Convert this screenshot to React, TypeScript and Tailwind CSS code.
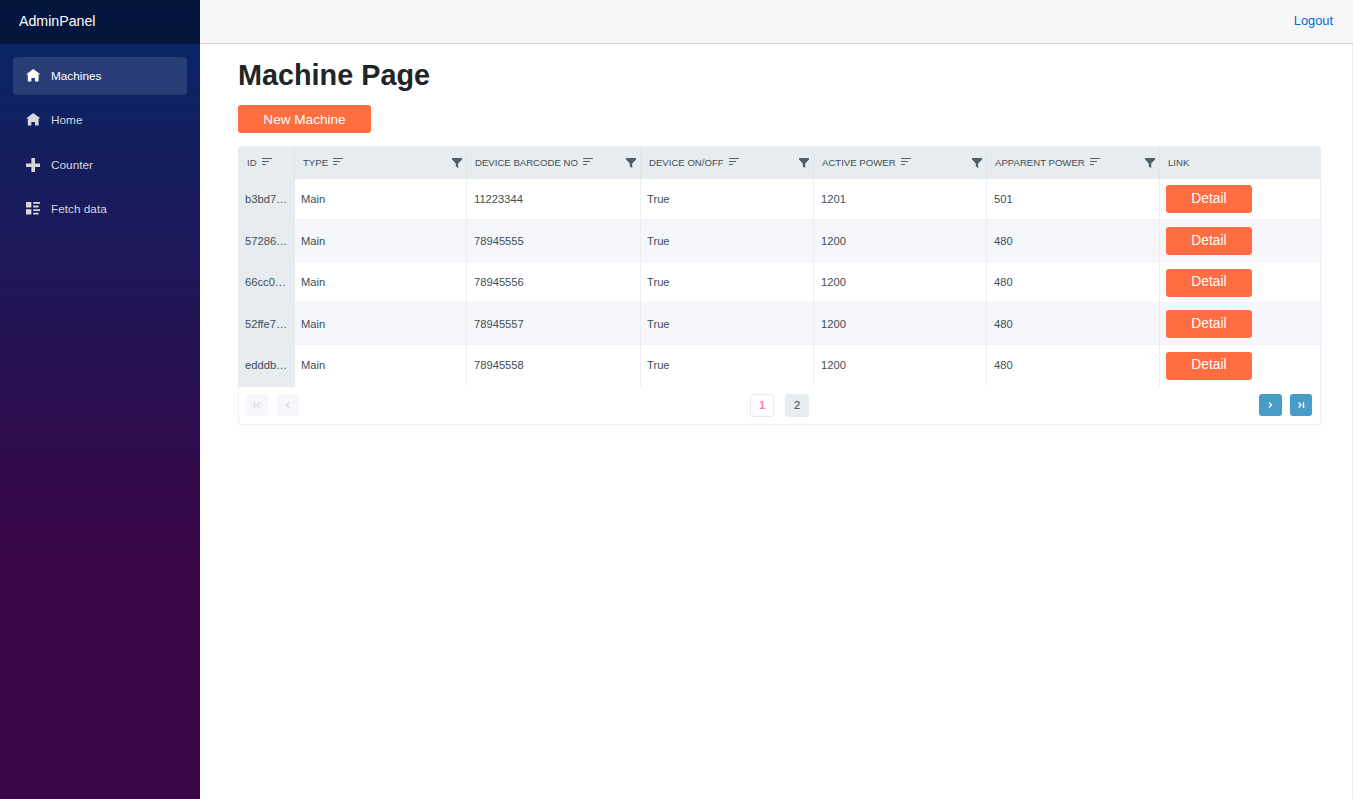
const machines = [
  { id: 'b3bd7…', barcode: '11223344', power: '1201', apparent: '501' },
  { id: '57286…', barcode: '78945555', power: '1200', apparent: '480' },
  { id: '66cc0…', barcode: '78945556', power: '1200', apparent: '480' },
  { id: '52ffe7…', barcode: '78945557', power: '1200', apparent: '480' },
  { id: 'edddb…', barcode: '78945558', power: '1200', apparent: '480' },
];

const columns = ['TYPE', 'DEVICE BARCODE NO', 'DEVICE ON/OFF', 'ACTIVE POWER', 'APPARENT POWER'];

const gridCols = 'grid grid-cols-[57px_172px_174px_173px_173px_173px_1fr]';

function NavIcon({ d }: { d: string }) {
  return (
    <svg viewBox="0 0 8 8" className="w-[14.4px] h-[14.4px] shrink-0" fill="currentColor">
      <path d={d} />
    </svg>
  );
}

const homePath = 'M4 0l-4 3h1v4h2v-2h2v2h2v-4.03l1 .03-4-3z';
const plusPath = 'M3 0v3h-3v2h3v3h2v-3h3v-2h-3v-3h-2z';
const listPath = 'M0 0v3h3v-3h-3zm4 0v1h4v-1h-4zm0 2v1h3v-1h-3zm-4 2v3h3v-3h-3zm4 0v1h4v-1h-4zm0 2v1h3v-1h-3z';

function NavItem({ label, icon, active }: { label: string; icon: string; active?: boolean }) {
  return (
    <a
      className={
        active
          ? 'flex items-center h-[38.4px] rounded-[4px] bg-white/[.12] text-white pl-[12.6px] gap-[11px] text-[11.8px]'
          : 'flex items-center h-[38.4px] rounded-[4px] text-[#d7d7d7] pl-[12.6px] gap-[11px] text-[11.8px]'
      }
    >
      <NavIcon d={icon} />
      <span className="pt-[1.5px]">{label}</span>
    </a>
  );
}

function SortIcon() {
  return (
    <svg viewBox="0 0 10 8" className="w-[10px] h-[8px] ml-[5px] shrink-0" stroke="#566470" strokeWidth="1" fill="none">
      <path d="M0 0.5h10M0 3.5h7M0 6.5h4" />
    </svg>
  );
}

function FilterIcon() {
  return (
    <svg viewBox="0 0 10 10" className="w-[10px] h-[10px] shrink-0 absolute right-[4px] top-[12px]" fill="#4f5f68">
      <path d="M0 0h10v1.5L6.2 5.4V10L3.8 8.6V5.4L0 1.5z" />
    </svg>
  );
}

function PagerButton({ path, enabled }: { path: string; enabled?: boolean }) {
  return (
    <button
      className={
        enabled
          ? 'w-[22.4px] h-[22.4px] rounded-[3px] bg-[#479cc8] flex items-center justify-center'
          : 'w-[22.4px] h-[22.4px] rounded-[3px] bg-[#f6f7fa] flex items-center justify-center'
      }
    >
      <svg viewBox="0 0 8 8" className="w-[8px] h-[8px]" fill="none" stroke={enabled ? '#ffffff' : '#d5dbe0'} strokeWidth="1.4">
        <path d={path} />
      </svg>
    </button>
  );
}

function DetailButton() {
  return (
    <button className="w-[86px] h-[28px] rounded-[3px] bg-[#ff6d41] text-white text-[13.8px]">Detail</button>
  );
}

function Cell({ last, className, children }: { last: boolean; className: string; children: React.ReactNode }) {
  return (
    <div
      className={`flex items-center pt-[1px] border-b border-r border-r-[#ebeff2] ${last ? 'border-b-transparent' : 'border-b-[#f1f3f6]'} ${className}`}
    >
      {children}
    </div>
  );
}

export default function App() {
  return (
    <div className="flex h-[799px] overflow-hidden bg-white font-['Liberation_Sans',Arial,sans-serif]">
      <aside className="w-[200px] shrink-0 bg-[linear-gradient(180deg,#052767_0%,#3a0647_70%)]">
        <div className="h-[44px] bg-black/40 flex items-center pl-[19px] text-white text-[14.2px]">AdminPanel</div>
        <nav className="flex flex-col gap-[6px] px-[13px] pt-[13px]">
          <NavItem label="Machines" icon={homePath} active />
          <NavItem label="Home" icon={homePath} />
          <NavItem label="Counter" icon={plusPath} />
          <NavItem label="Fetch data" icon={listPath} />
        </nav>
      </aside>

      <main className="flex-1 flex flex-col min-w-0">
        <header className="h-[44px] shrink-0 bg-[#f7f7f7] border-b border-[#d6d5d5] flex items-center justify-end pr-[20px]">
          <a className="text-[12.8px] text-[#0366d6] mb-[2px]">Logout</a>
        </header>

        <div className="flex-1 pl-[38px] pr-[31px] pt-[12px] border-r border-[#eeeeee]">
          <h1 className="text-[28.8px] leading-[38px] font-bold text-[#212529]">Machine Page</h1>
          <button className="mt-[11px] pt-[2px] w-[133px] h-[28px] rounded-[3px] bg-[#ff6d41] text-white text-[13.6px]">
            New Machine
          </button>

          <div className="mt-[13px] rounded-[4px] shadow-[0_6px_14px_rgba(0,0,0,0.02)] text-[#414e55]">
            <div className={`${gridCols} h-[32.6px] bg-[#e6ecef] text-[9.6px] rounded-t-[4px]`}>
              <div className="flex items-center pl-[9px] border-r border-[#dfe5e9]">
                <span className="pt-[2px]">ID</span>
                <SortIcon />
              </div>
              {columns.map((label) => (
                <div key={label} className="relative flex items-center pl-[8px] border-r border-[#dfe5e9]">
                  <span className="pt-[2px]">{label}</span>
                  <SortIcon />
                  <FilterIcon />
                </div>
              ))}
              <div className="flex items-center pl-[8px]">
                <span className="pt-[2px]">LINK</span>
              </div>
            </div>

            {machines.map((m, i) => {
              const last = i === machines.length - 1;
              return (
                <div
                  key={m.id}
                  className={`${gridCols} h-[41.6px] text-[11.2px] ${i % 2 === 1 ? 'bg-[#f6f7fa]' : 'bg-white'}`}
                >
                  <div className="bg-[#e6ecef] flex items-center pl-[7px] min-w-0">{m.id}</div>
                  <Cell last={last} className="pl-[6px]">Main</Cell>
                  <Cell last={last} className="pl-[7px]">{m.barcode}</Cell>
                  <Cell last={last} className="pl-[6px]">True</Cell>
                  <Cell last={last} className="pl-[7px]">{m.power}</Cell>
                  <Cell last={last} className="pl-[7px]">{m.apparent}</Cell>
                  <Cell last={last} className="pl-[6px]">
                    <DetailButton />
                  </Cell>
                </div>
              );
            })}

            <div className="relative h-[38.4px] flex items-center justify-between pl-[7px] pr-[8px] border-x border-b border-[#eef0f3] rounded-b-[4px]">
              <div className="flex gap-[8.4px]">
                <PagerButton path="M1.5 1v6M6.5 1.5L4 4l2.5 2.5" />
                <PagerButton path="M5 1.5L2.5 4 5 6.5" />
              </div>
              <div className="absolute left-[511px] top-[7px] flex gap-[11px] text-[11.2px]">
                <span className="w-[24px] h-[23px] rounded-[3px] border border-[#e6ecef] text-[#ff7c92] font-bold flex items-center justify-center">
                  1
                </span>
                <span className="w-[24px] h-[23px] rounded-[3px] bg-[#e6ecef] text-[#3a474d] flex items-center justify-center">
                  2
                </span>
              </div>
              <div className="flex gap-[8px]">
                <PagerButton enabled path="M3 1.5L5.5 4 3 6.5" />
                <PagerButton enabled path="M1.5 1.5L4 4 1.5 6.5M6.5 1v6" />
              </div>
            </div>
          </div>
        </div>
      </main>
    </div>
  );
}
